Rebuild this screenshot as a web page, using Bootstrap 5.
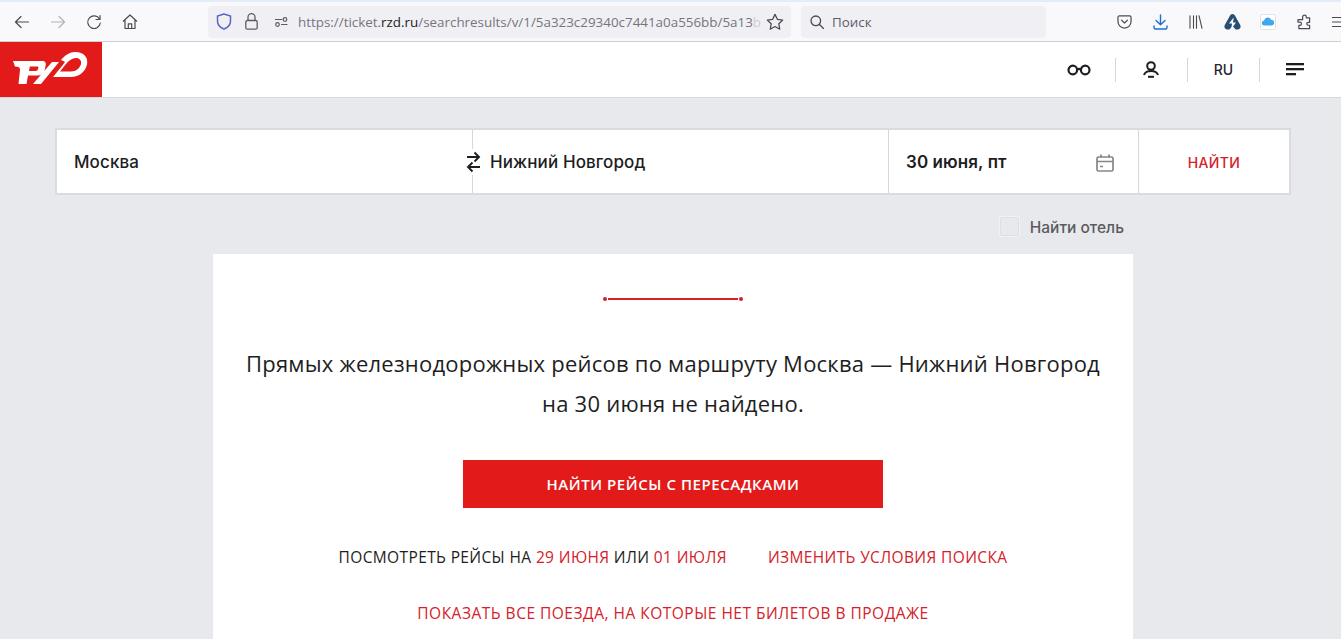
<!doctype html>
<html lang="ru">
<head>
<meta charset="utf-8">
<title>РЖД</title>
<link href="https://cdn.jsdelivr.net/npm/bootstrap@5.3.0/dist/css/bootstrap.min.css" rel="stylesheet">
<style>
html,body{height:639px;overflow:hidden}
body{background:#e8e9ed;font-family:Inter,"Liberation Sans",sans-serif;color:#1d1d22}
.chrome{height:42px;background:#f9f9fb;border-top:2px solid #e3ecf8;border-bottom:1px solid #cfcfd4;overflow:hidden}
.tb-btn{width:36px;height:36px;flex:none}
.back-group{padding-left:4px;gap:0;width:208px;flex:none}
.urlbar{width:583px;height:32px;background:#f0f0f4;border-radius:4px;font:13.4px "Open Sans","Noto Sans",sans-serif;color:#75757e;white-space:nowrap;padding-left:8px;flex:none}
.urlbar b{font-weight:400;color:#1c1b22}
.urlbar i{font-style:normal;color:#cfcfd4}
.url-text{margin-left:9px}
.lock-ic{margin-left:13px}
.star-ic{margin-right:7px}
.findbar{width:245px;height:32px;background:#f0f0f4;border-radius:4px;margin-left:10px;padding-left:9px;font:13.4px "Open Sans","Noto Sans",sans-serif;color:#5b5b66;flex:none}
.tools{margin-left:60px;flex:none}
.tool{width:36px;display:flex;justify-content:center;flex:none}
.site-head{height:56px;background:#fff;border-bottom:1px solid #d6d7db}
.brand{width:102px;height:55px;background:#e21a1a;display:block}
.brand svg{display:block}
.head-actions{padding-right:10px}
.act{width:72px;display:flex;justify-content:center;align-items:center;height:24px;font-size:14px;font-weight:500;color:#25252b}
.act+.act{border-left:1px solid #d6d7db}
.nudge{margin-right:2px}
.search-wrap{padding:30px 50px 0 55px}
.search-bar{height:67px;background:#fff;border:2px solid #dadbdf}
.fld{font-size:17px;font-weight:500;padding:2px 0 0 17px;letter-spacing:.1px}
.f1{width:415px}
.f2{width:416px;border-left:1px solid #d6d7db}
.f3{width:250px;border-left:1px solid #d6d7db;padding-right:24px;font-weight:600;padding-left:17px}
.f4{flex:1;border-left:1px solid #d6d7db;color:#d4212a;font-size:14px;font-weight:500;letter-spacing:.4px;padding-top:1px}
.swap{left:-14px;top:50%;transform:translateY(-50%);background:#fff;padding:2px 0;width:28px;height:26px}
.hotel-row{padding:21px 217px 0 0;font-size:15.5px;font-weight:500;color:#5a5b60;height:59px;justify-content:flex-end}
.chk{width:21px;height:21px;border:2px solid #f1f1f4;background:#e8e9ed;border-radius:3px;margin-right:10px;box-sizing:border-box;outline:1px solid #dedfe3;outline-offset:-2px}
.result{width:920px;height:400px;margin-left:213px;background:#fff;padding-top:42px;text-align:center}
.deco{width:140px;height:6px;margin:0 auto;display:block}
.msg{font-family:"Open Sans",sans-serif;font-size:22px;line-height:40px;font-weight:500;margin:41px 0 37px;letter-spacing:.23px;color:#1d1d22;white-space:nowrap}
.cta{width:420px;height:48px;background:#e21a1a;color:#fff;border:0;border-radius:0;font-family:"Open Sans",sans-serif;font-weight:600;font-size:15px;letter-spacing:.55px;padding:0}
.cta:hover{background:#e21a1a;color:#fff}
.links{font-family:"Open Sans",sans-serif;font-size:15.5px;font-weight:500;line-height:20px}
.links a{color:#d4212a;text-decoration:none}
.l1{margin-top:39px;gap:41px;letter-spacing:.37px}
.l2{margin-top:36px;letter-spacing:.5px}
</style>
</head>
<body>
<div class="chrome d-flex align-items-center">
  <div class="back-group d-flex align-items-center">
    <div class="tb-btn d-flex align-items-center justify-content-center"><svg width="16" height="16" viewBox="0 0 16 16" fill="none" stroke="#4a4a52" stroke-width="1.2" stroke-linecap="round" stroke-linejoin="round"><path d="M1.500 8h13M7 2.500 1.500 8 7 13.500"/></svg></div>
    <div class="tb-btn d-flex align-items-center justify-content-center"><svg width="16" height="16" viewBox="0 0 16 16" fill="none" stroke="#b4b4b8" stroke-width="1.2" stroke-linecap="round" stroke-linejoin="round"><path d="M1.500 8h13M9 2.500 14.500 8 9 13.500"/></svg></div>
    <div class="tb-btn d-flex align-items-center justify-content-center"><svg width="16" height="16" viewBox="0 0 16 16" fill="none" stroke="#4a4a52" stroke-width="1.2" stroke-linecap="round" stroke-linejoin="round"><path d="M13.500 5A6.300 6.300 0 1 0 14.300 9M14 1.500V5.500H10"/></svg></div>
    <div class="tb-btn d-flex align-items-center justify-content-center"><svg width="16" height="16" viewBox="0 0 16 16" fill="none" stroke="#4a4a52" stroke-width="1.2" stroke-linejoin="round"><path d="M1 7.500 8 1l7 6.500M3 6v8.500h10V6M6.300 14.500V9.800h3.400v4.700"/></svg></div>
  </div>
  <div class="urlbar d-flex align-items-center">
    <svg width="16" height="17" viewBox="0 0 16 17" fill="none" stroke="#5a63c8" stroke-width="1.500"><path d="M8 1 1.500 3v5c0 4 3 6.800 6.500 8 3.500-1.200 6.500-4 6.500-8V3z"/></svg>
    <svg class="lock-ic" width="13" height="17" viewBox="0 0 13 17" fill="none" stroke="#5b5b66" stroke-width="1.300"><rect x=".8" y="7.500" width="11.400" height="8.700" rx="1.500"/><path d="M3 7.500V4.200a3.500 3.500 0 0 1 7 0v3.300"/></svg>
    <svg class="ms-3" width="15" height="12" viewBox="0 0 15 12" fill="none" stroke="#5b5b66" stroke-width="1.200"><path d="M1 3.500h7.500M13.500 8.500H7"/><circle cx="11" cy="3.500" r="1.800"/><circle cx="3.500" cy="8.500" r="1.800"/></svg>
    <div class="url-text">https://ticket.<b>rzd.ru</b>/searchresults/v/1/5a323c29340c7441a0a556bb/5a13<i>b</i></div>
    <svg class="ms-auto star-ic" width="18" height="18" viewBox="0 0 17 17" fill="none" stroke="#4a4a52" stroke-width="1.200" stroke-linejoin="round"><path d="m8.500 1.300 2.200 4.700 5.100.7-3.700 3.500.9 5.100-4.500-2.500-4.500 2.500.9-5.100L1.200 6.700l5.100-.7z"/></svg>
  </div>
  <div class="findbar d-flex align-items-center">
    <svg class="me-2" width="14" height="14" viewBox="0 0 14 14" fill="none" stroke="#4a4a52" stroke-width="1.300" stroke-linecap="round"><circle cx="5.800" cy="5.800" r="4.800"/><path d="m9.500 9.500 4 4"/></svg>Поиск
  </div>
  <div class="tools d-flex align-items-center">
    <div class="tool"><svg width="15" height="14" viewBox="0 0 16 15" fill="none" stroke="#4a4a52" stroke-width="1.300" stroke-linejoin="round" stroke-linecap="round"><path d="M2.500 1h11A1.500 1.500 0 0 1 15 2.500V7a7 7 0 0 1-14 0V2.500A1.500 1.500 0 0 1 2.500 1z"/><path d="m4.800 5.500 3.200 3 3.200-3"/></svg></div>
    <div class="tool"><svg width="15" height="16" viewBox="0 0 15 16" fill="none" stroke="#1c6fd0" stroke-width="1.400" stroke-linecap="round" stroke-linejoin="round"><path d="M7.500 1v9.500M3 6.500l4.500 4.300L12 6.500M1 12v1.500c0 1 .6 1.500 1.500 1.500h10c.9 0 1.500-.5 1.500-1.500V12"/></svg></div>
    <div class="tool"><svg width="14" height="14" viewBox="0 0 14 14" fill="none" stroke="#4a4a52" stroke-width="1.100" stroke-linecap="round"><path d="M1 .7v12.600M4.500 .7v12.600M7.500 .7v12.600M10 .7l3 12.600"/></svg></div>
    <div class="tool"><svg width="17" height="16" viewBox="0 0 17 16"><path fill="#264f74" d="M8.500 0c1.300 0 2.100.8 2.700 1.900l5 9c1.100 2-.1 4.600-2.500 4.600h-2L8.500 12l-3.200 3.500h-2C.9 15.500-.3 12.900.8 10.900l5-9C6.400.8 7.200 0 8.500 0z"/><path fill="#fff" d="M9.700 3.500 5 9.500h3L7.300 15l4.700-6.500H9z"/></svg></div>
    <div class="tool"><svg width="16" height="16" viewBox="0 0 16 16"><rect x=".5" y=".5" width="15" height="15" rx="2" fill="#fff" stroke="#e2e2e6"/><path fill="#3fa9ef" d="M4.500 11.500a2.500 2.500 0 0 1-.4-5 3.600 3.600 0 0 1 6.900-.8 2.900 2.900 0 0 1 .4 5.800z"/></svg></div>
    <div class="tool"><svg width="14" height="16" viewBox="0 0 15 16" fill="none" stroke="#4a4a52" stroke-width="1.300" stroke-linejoin="round"><path d="M6 3.500V2.700a2 2 0 0 1 4 0v.8h3.500v5H12a1.500 1.500 0 0 0 0 3h1.500v3.700H2v-3.500h1a1.800 1.800 0 0 0 0-3.600H1V5.500h5z"/></svg></div>
    <div class="tool"><svg width="16" height="12" viewBox="0 0 16 12" fill="none" stroke="#4a4a52" stroke-width="1.200"><path d="M0 1.500h16M0 6h16M0 10.500h16"/></svg></div>
  </div>
</div>
<header class="site-head d-flex justify-content-between">
  <a class="brand" href="#" aria-label="РЖД">
    <svg width="102" height="55" viewBox="0 42 102 55"><path fill="#fff" fill-rule="evenodd" d="M13 61H42C45.500 61 46.500 63 45.500 66L44.500 71C43.500 74 41 75.500 37 75.500H28L26.500 84H18.500L20 70C20.300 67.500 18.500 66.500 15 66.500ZM29.800 66.500 29 71H35.500C37 71 37.800 70.300 38 69L38.400 67.500C38.500 66.800 38 66.500 37 66.500Z"/><path fill="#fff" d="M33 84 52 62H59L41 84Z"/><path fill="#fff" fill-rule="evenodd" d="M75 52C84 52 88.500 57.500 87 64.500 85.500 71.500 79 77 71 77H53L62 66 65 62C63 61 62 60.500 61 60 65 55 70 52 75 52ZM76 58C72 58 69 60.500 66 64L60 71.500H71C76 71.500 80 68 81 64 81.700 60.500 79.500 58 76 58Z"/></svg>
  </a>
  <div class="head-actions d-flex align-items-center">
    <div class="act"><svg width="24" height="12" viewBox="0 0 24 12" fill="none" stroke="#1d1d22" stroke-width="2.200"><circle cx="5.800" cy="6" r="4.300"/><circle cx="18.200" cy="6" r="4.300"/><path d="M10 5.500c1.300-.7 2.700-.7 4 0"/></svg></div>
    <div class="act"><svg class="nudge" width="16" height="17" viewBox="0 0 16 17" fill="none" stroke="#1d1d22" stroke-width="2"><circle cx="8" cy="5" r="3.800"/><path d="M1 14c.8-2.600 3.400-4 7-4s6.200 1.400 7 4"/><path d="M5 15.800h6"/></svg></div>
    <div class="act">RU</div>
    <div class="act"><svg class="nudge" width="18" height="13" viewBox="0 0 18 13" fill="#1d1d22"><rect width="18" height="2.300"/><rect y="5" width="18" height="2.300"/><rect y="10" width="10" height="2.300"/></svg></div>
  </div>
</header>
<main>
  <div class="search-wrap">
    <div class="search-bar d-flex align-items-stretch">
      <div class="fld f1 d-flex align-items-center">Москва</div>
      <div class="fld f2 d-flex align-items-center position-relative">
        <div class="swap position-absolute d-flex justify-content-center"><svg width="15" height="22" viewBox="0 0 15 22" fill="none" stroke="#1d1d22" stroke-width="1.900"><path d="M1 6h12M8.500 1.500 13 6l-4.500 4.500M14 16H2M6.500 11.500 2 16l4.500 4.500"/></svg></div>
        Нижний Новгород
      </div>
      <div class="fld f3 d-flex align-items-center justify-content-between">30 июня, пт
        <svg width="18" height="18" viewBox="0 0 18 18" fill="none" stroke="#85868b" stroke-width="1.700"><rect x="1" y="3" width="16" height="14" rx="1.500"/><path d="M1 7.500h16M5 .5v3M13 .5v3M4 12.500h3"/></svg>
      </div>
      <div class="f4 d-flex align-items-center justify-content-center">НАЙТИ</div>
    </div>
  </div>
  <div class="hotel-row d-flex align-items-start"><span class="chk d-block"></span>Найти отель</div>
  <section class="result">
    <svg class="deco" viewBox="0 0 140 6"><circle cx="2" cy="3" r="2" fill="#d4212a"/><rect x="5" y="2" width="130" height="2" fill="#d4212a"/><circle cx="138" cy="3" r="2" fill="#d4212a"/></svg>
    <p class="msg">Прямых железнодорожных рейсов по маршруту Москва — Нижний Новгород<br>на 30 июня не найдено.</p>
    <button class="btn cta" type="button">НАЙТИ РЕЙСЫ С ПЕРЕСАДКАМИ</button>
    <div class="links l1 d-flex justify-content-center">
      <span>ПОСМОТРЕТЬ РЕЙСЫ НА <a href="#">29 ИЮНЯ</a> ИЛИ <a href="#">01 ИЮЛЯ</a></span>
      <a href="#">ИЗМЕНИТЬ УСЛОВИЯ ПОИСКА</a>
    </div>
    <div class="links l2"><a href="#">ПОКАЗАТЬ ВСЕ ПОЕЗДА, НА КОТОРЫЕ НЕТ БИЛЕТОВ В ПРОДАЖЕ</a></div>
  </section>
</main>
<script src="https://cdn.jsdelivr.net/npm/bootstrap@5.3.0/dist/js/bootstrap.bundle.min.js"></script>
</body>
</html>
